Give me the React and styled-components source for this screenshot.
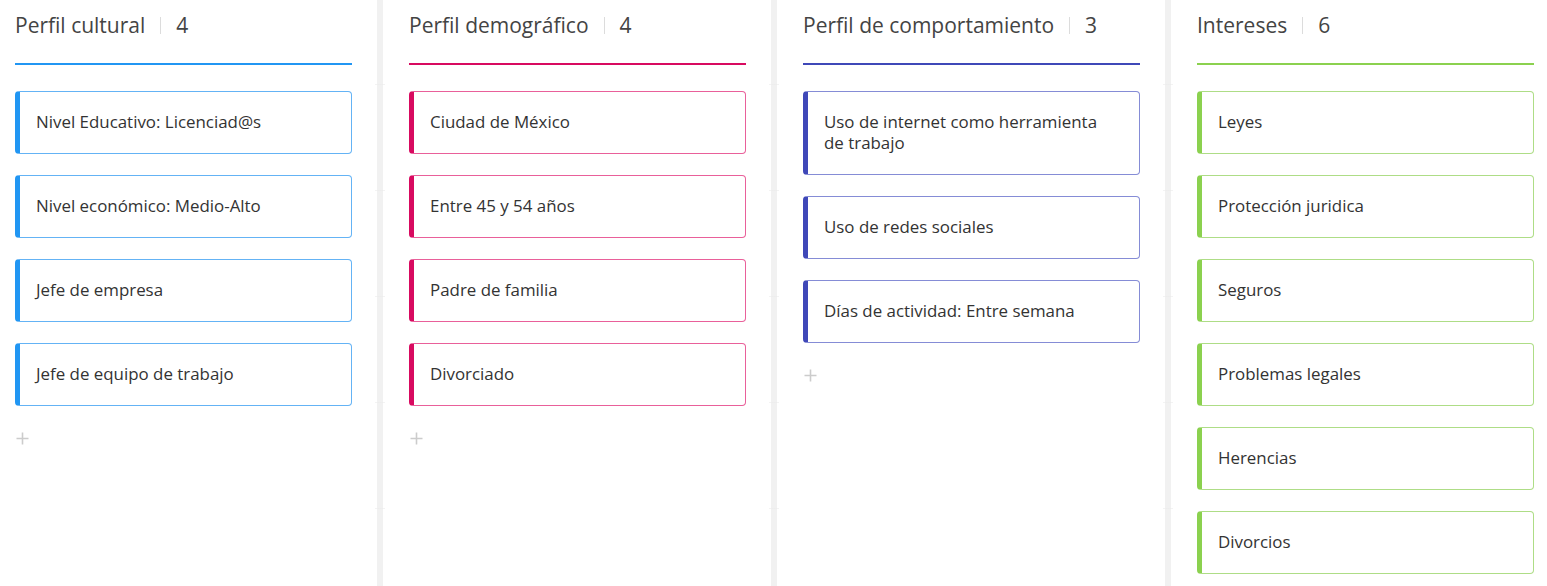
import React from 'react'
import styled, { createGlobalStyle } from 'styled-components'

const GlobalStyle = createGlobalStyle`
  html, body {
    margin: 0;
    padding: 0;
    background: #fff;
    overflow: hidden;
  }
  body {
    font-family: 'Open Sans', 'Liberation Sans', sans-serif;
    color: #333;
  }
`

const Board = styled.div`
  display: flex;
  align-items: flex-start;
  margin-left: -17px;
  height: 586px;
`

const Column = styled.section`
  position: relative;
  flex: 0 0 394px;
  box-sizing: border-box;
  height: 586px;
  padding: 0 25px 0 26px;
  border-left: 6px solid #f1f1f1;

  &::before {
    content: '';
    position: absolute;
    left: -8px;
    top: 84px;
    width: 10px;
    bottom: 0;
    background: repeating-linear-gradient(
      to bottom,
      #ebebeb 0,
      #ebebeb 1px,
      transparent 1px,
      transparent 106px
    );
    opacity: 0.6;
  }
`

const Header = styled.header`
  display: flex;
  align-items: center;
  padding: 11px 0 24px;
  border-bottom: 2px solid ${(p) => p.color};
  margin-bottom: 26px;
  font-size: 21px;
  line-height: 28px;
  color: #444;
`

const Divider = styled.span`
  width: 1px;
  height: 17px;
  margin: 0 15px;
  background: #dcdcdc;
`

const Card = styled.div`
  box-sizing: border-box;
  padding: 19px 30px 21px 16px;
  margin-bottom: 21px;
  border: 1px solid ${(p) => p.light};
  border-left: 5px solid ${(p) => p.color};
  border-radius: 4px;
  background: #fff;
  font-size: 16.9px;
  line-height: 21px;
  color: #333;
`

const AddButton = styled.button`
  display: block;
  margin: 26px 0 0 1px;
  padding: 0;
  border: 0;
  background: none;
  line-height: 0;
  cursor: pointer;
`

const columns = [
  {
    title: 'Perfil cultural',
    color: '#2196f3',
    light: '#64b3f5',
    items: [
      'Nivel Educativo: Licenciad@s',
      'Nivel económico: Medio-Alto',
      'Jefe de empresa',
      'Jefe de equipo de trabajo',
    ],
  },
  {
    title: 'Perfil demográfico',
    color: '#d80a60',
    light: '#e9609a',
    items: ['Ciudad de México', 'Entre 45 y 54 años', 'Padre de familia', 'Divorciado'],
  },
  {
    title: 'Perfil de comportamiento',
    color: '#3f48b8',
    light: '#858cd6',
    items: [
      'Uso de internet como herramienta de trabajo',
      'Uso de redes sociales',
      'Días de actividad: Entre semana',
    ],
  },
  {
    title: 'Intereses',
    color: '#8bd14f',
    light: '#aedd86',
    items: ['Leyes', 'Protección juridica', 'Seguros', 'Problemas legales', 'Herencias', 'Divorcios'],
    hideAdd: true,
  },
]

const Plus = () => (
  <svg width='13' height='13' viewBox='0 0 13 13'>
    <path d='M6.5 0.5v12M0.5 6.5h12' stroke='#cccccc' strokeWidth='1.6' fill='none' />
  </svg>
)

const App = () => {
  return (
    <>
      <GlobalStyle />
      <Board>
        {columns.map((col) => (
          <Column key={col.title}>
            <Header color={col.color}>
              {col.title}
              <Divider />
              {col.items.length}
            </Header>
            {col.items.map((item) => (
              <Card key={item} color={col.color} light={col.light}>
                {item}
              </Card>
            ))}
            {!col.hideAdd && (
              <AddButton aria-label='Agregar'>
                <Plus />
              </AddButton>
            )}
          </Column>
        ))}
      </Board>
    </>
  )
}

export default App
